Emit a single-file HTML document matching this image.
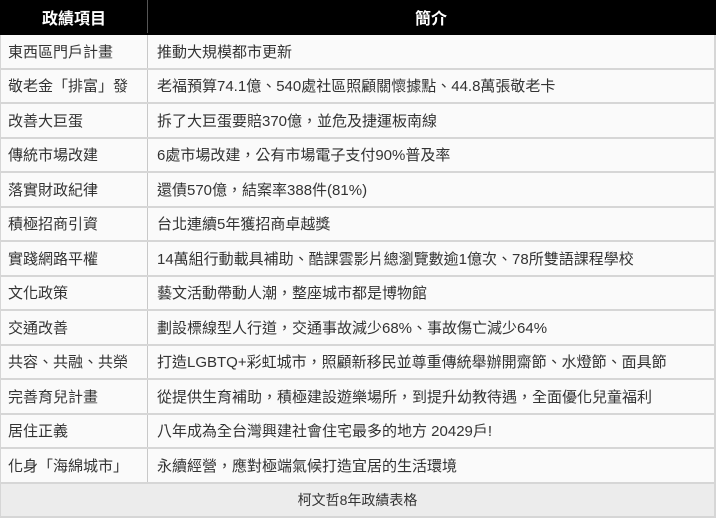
<!DOCTYPE html>
<html><head><meta charset="utf-8"><style>
body{margin:0;width:716px;height:518px;overflow:hidden;background:#fafafa;font-family:"Liberation Sans","Noto Sans CJK TC",sans-serif;}
.r{position:absolute;left:0;width:716px;border-bottom:2px solid #d6d6d6;box-sizing:border-box;background:#fafafa;border-right:2px solid #d6d6d6;border-left:1px solid #d6d6d6}
.c1,.c2{position:absolute;top:0;height:100%;display:flex;align-items:center;font-size:15px;color:#333;white-space:nowrap;}
.c1{left:0;width:147px;padding-left:7px;box-sizing:border-box;border-right:1px solid #c8c8c8;}
.c2{left:147px;padding-left:9px;}
.h{background:#000;border-color:#000}
.h .c1,.h .c2{color:#fff;font-weight:bold;justify-content:center;padding:0;border-color:#555;font-size:16px}
.h .c2{width:566px}
.cap{background:#ececec;color:#333;font-size:14px;display:flex;align-items:center;justify-content:center;}
</style></head><body>
<div class="r h" style="top:0;height:35px"><div class="c1">政績項目</div><div class="c2">簡介</div></div>
<div class="r" style="top:35px;height:34.5px"><div class="c1">東西區門戶計畫</div><div class="c2">推動大規模都市更新</div></div>
<div class="r" style="top:69.5px;height:34.5px"><div class="c1">敬老金「排富」發</div><div class="c2">老福預算74.1億、540處社區照顧關懷據點、44.8萬張敬老卡</div></div>
<div class="r" style="top:104px;height:34.5px"><div class="c1">改善大巨蛋</div><div class="c2">拆了大巨蛋要賠370億，並危及捷運板南線</div></div>
<div class="r" style="top:138.5px;height:34.5px"><div class="c1">傳統市場改建</div><div class="c2">6處市場改建，公有市場電子支付90%普及率</div></div>
<div class="r" style="top:173px;height:34.5px"><div class="c1">落實財政紀律</div><div class="c2">還債570億，結案率388件(81%)</div></div>
<div class="r" style="top:207.5px;height:34.5px"><div class="c1">積極招商引資</div><div class="c2">台北連續5年獲招商卓越獎</div></div>
<div class="r" style="top:242px;height:34.5px"><div class="c1">實踐網路平權</div><div class="c2">14萬組行動載具補助、酷課雲影片總瀏覽數逾1億次、78所雙語課程學校</div></div>
<div class="r" style="top:276.5px;height:34.5px"><div class="c1">文化政策</div><div class="c2">藝文活動帶動人潮，整座城市都是博物館</div></div>
<div class="r" style="top:311px;height:34.5px"><div class="c1">交通改善</div><div class="c2">劃設標線型人行道，交通事故減少68%、事故傷亡減少64%</div></div>
<div class="r" style="top:345.5px;height:34.5px"><div class="c1">共容、共融、共榮</div><div class="c2">打造LGBTQ+彩虹城市，照顧新移民並尊重傳統舉辦開齋節、水燈節、面具節</div></div>
<div class="r" style="top:380px;height:34.5px"><div class="c1">完善育兒計畫</div><div class="c2">從提供生育補助，積極建設遊樂場所，到提升幼教待遇，全面優化兒童福利</div></div>
<div class="r" style="top:414.5px;height:34.5px"><div class="c1">居住正義</div><div class="c2">八年成為全台灣興建社會住宅最多的地方 20429戶!</div></div>
<div class="r" style="top:449px;height:35px"><div class="c1">化身「海綿城市」</div><div class="c2">永續經營，應對極端氣候打造宜居的生活環境</div></div>
<div class="r cap" style="top:484px;height:34px">柯文哲8年政績表格</div>
</body></html>
